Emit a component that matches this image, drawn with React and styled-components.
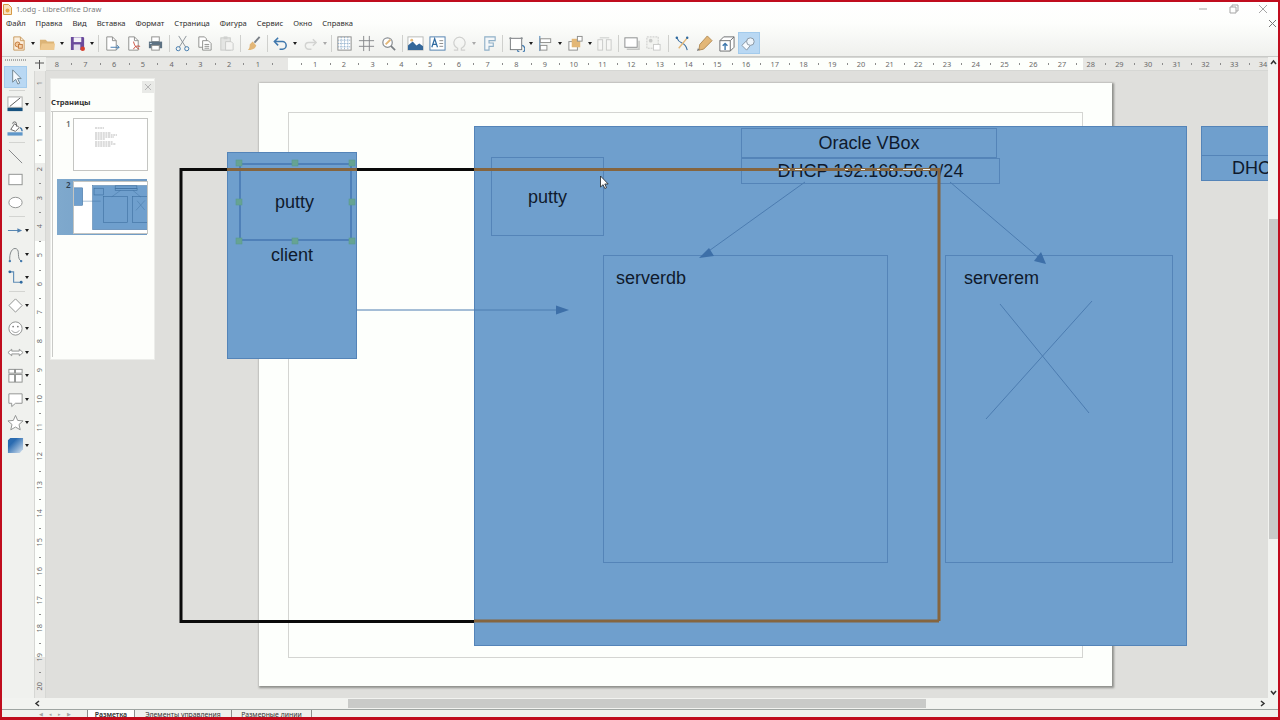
import React from 'react';
import styled, { createGlobalStyle } from 'styled-components';

const GlobalStyle = createGlobalStyle`
  html, body { margin: 0; padding: 0; background: #fff; overflow: hidden; }
  * { box-sizing: border-box; }
`;

// top left corner of the canvas in page pixels, nodes below are given in page pixels
const ORIGIN_X = 158;
const ORIGIN_Y = 71;
const CM = 28.73;

const Window = styled.div`
  width: 1280px;
  height: 720px;
  display: flex;
  flex-direction: column;
  overflow: hidden;
  border: 2px solid #c00d1e;
  border-bottom-width: 3px;
  background: #f0f1ee;
  font-family: "Noto Sans", "Open Sans", sans-serif;
`;

const Head = styled.div`
  background: linear-gradient(#ffffff, #fdfefc 40%, #eff0ed);
  border-bottom: 1px solid #c9cac7;
`;

const TitleBar = styled.div`
  height: 14px;
  display: flex;
  align-items: center;
  padding-left: 1px;
  gap: 4px;
  font-size: 7.5px;
  color: #7c7c7c;
`;

const WindowButtons = styled.div`
  margin-left: auto;
  display: flex;
  align-items: center;
  gap: 14px;
  padding-right: 7px;
`;

const WinButton = styled.svg`
  width: 16px;
  height: 10px;
  stroke: #a5a5a5;
  fill: none;
`;

const MenuBar = styled.div`
  height: 14px;
  display: flex;
  align-items: center;
  padding-left: 4px;
  gap: 10px;
  font-size: 7.6px;
  color: #2d2d2d;
`;

const DocClose = styled.svg`
  margin-left: auto;
  margin-right: 1px;
  width: 9px;
  height: 9px;
  stroke: #777;
  fill: none;
`;

const Toolbar = styled.div`
  height: 26px;
  display: flex;
  align-items: center;
  padding-left: 5px;
`;

const ToolButton = styled.div`
  width: 22px;
  height: 22px;
  flex: none;
  display: flex;
  align-items: center;
  justify-content: center;
  background: ${p => (p.$active ? '#b9d8f3' : 'transparent')};
  border: 1px solid ${p => (p.$active ? '#a3cbec' : 'transparent')};
  svg { width: 17px; height: 17px; display: block; }
`;

const DropArrow = styled.div`
  width: 7.5px;
  height: 22px;
  flex: none;
  display: flex;
  align-items: center;
  justify-content: center;
  &::after {
    content: "";
    border-left: 2.5px solid transparent;
    border-right: 2.5px solid transparent;
    border-top: 3px solid ${p => (p.$faded ? '#a9a9a9' : '#1c1c1c')};
  }
`;

const Sep = styled.div`
  width: ${p => (p.$wide ? 7 : 5)}px;
  height: 17px;
  flex: none;
  &::after {
    content: "";
    display: block;
    width: 1px;
    height: 100%;
    margin: 0 auto;
    background: #cfd0cd;
  }
`;

const Body = styled.div`
  flex: 1;
  min-height: 0;
  display: flex;
`;

const SideTools = styled.div`
  width: 32px;
  flex: none;
  display: flex;
  flex-direction: column;
  padding: 2px 0 0 2px;
  background: #f0f1ee;
`;

const Grip = styled.div`
  width: 22px;
  height: 2px;
  margin: 0 0 4px 1px;
  flex: none;
  background-image: linear-gradient(90deg, #a9aaa8 50%, transparent 50%);
  background-size: 2px 2px;
`;

const SideRow = styled.div`
  height: 23.4px;
  flex: none;
  display: flex;
  align-items: center;
  ${ToolButton} { width: 23px; }
  ${DropArrow} { margin-left: -4px; }
`;

const SideSep = styled.div`
  height: 4.6px;
  flex: none;
  display: flex;
  align-items: center;
  padding-left: 5px;
  &::after {
    content: "";
    width: 16px;
    height: 1px;
    background: #d3d4d1;
  }
`;

const Center = styled.div`
  flex: 1;
  min-width: 0;
  display: flex;
  flex-direction: column;
`;

const RulerRow = styled.div`
  height: 14px;
  flex: none;
  display: flex;
`;

const RulerCorner = styled.svg`
  width: 12px;
  height: 14px;
  flex: none;
  stroke: #555;
  fill: none;
`;

const HRuler = styled.div`
  flex: 1;
  min-width: 0;
  display: flex;
  overflow: hidden;
  border-top: 1px solid #d6d7d4;
  border-bottom: 1px solid #d6d7d4;
  background: linear-gradient(90deg, #e7e7e4 242px, #fdfffc 242px, #fdfffc 1037px, #e7e7e4 1037px);
`;

const HCell = styled.div`
  width: ${CM}px;
  flex: none;
  position: relative;
  text-align: center;
  font-size: 7.4px;
  line-height: 12px;
  color: #6a6a6a;
  &:first-child { margin-left: -3.6px; }
  &::after {
    content: "";
    position: absolute;
    left: 0;
    top: 5px;
    width: 1px;
    height: 2px;
    background: #8c8c8c;
  }
`;

const WorkRow = styled.div`
  flex: 1;
  min-height: 0;
  display: flex;
`;

const VRuler = styled.div`
  width: 12px;
  flex: none;
  display: flex;
  flex-direction: column;
  overflow: hidden;
  border-left: 1px solid #d6d7d4;
  border-right: 1px solid #d6d7d4;
  background: linear-gradient(#e7e7e4 41px, #fdfffc 41px, #fdfffc 92px, #ecedea 92px, #ecedea 170px, #fdfffc 170px, #fdfffc 586px, #e7e7e4 586px);
`;

const VCell = styled.div`
  height: ${CM}px;
  flex: none;
  position: relative;
  display: flex;
  align-items: center;
  justify-content: center;
  font-size: 7.4px;
  color: #6a6a6a;
  &:first-child { margin-top: -2.5px; }
  &::after {
    content: "";
    position: absolute;
    top: 0;
    left: 4px;
    width: 2px;
    height: 1px;
    background: #8c8c8c;
  }
`;

const VLabel = styled.span`
  writing-mode: vertical-rl;
  transform: rotate(180deg);
  line-height: 1;
`;

const Workspace = styled.div`
  flex: 1;
  min-width: 0;
  display: flex;
  background: #dfdfdc;
`;

const PagesColumn = styled.div`
  width: 112px;
  flex: none;
  padding: 7px 0 0 4px;
`;

const PagesPanel = styled.div`
  width: 105px;
  height: 282px;
  display: flex;
  flex-direction: column;
  padding: 2px 0 2px 0;
  background: #fdfefb;
  border: 1px solid #ecedea;
`;

const PanelClose = styled.div`
  align-self: flex-end;
  width: 12px;
  height: 12px;
  display: flex;
  align-items: center;
  justify-content: center;
  background: #e9eae7;
  svg { width: 6px; height: 6px; stroke: #b5b5b5; fill: none; }
`;

const PanelTitle = styled.div`
  margin-top: 3px;
  margin-right: 2px;
  padding-bottom: 3px;
  font-size: 7.6px;
  font-weight: 700;
  line-height: 12px;
  color: #333;
  border-bottom: 1px solid #c9cac7;
`;

const PageList = styled.div`
  flex: 1;
  display: flex;
  flex-direction: column;
  gap: 8px;
  padding: 6px 7px 0 4px;
  margin-left: 1px;
  border-left: 1px solid #c9cac7;
`;

const PageItem = styled.div`
  height: ${p => (p.$selected ? 56 : 53)}px;
  display: flex;
  align-items: center;
  background: ${p => (p.$selected ? 'linear-gradient(90deg, #7fa9cd, #6f9ac4)' : 'transparent')};
  padding-left: 9px;
  gap: 3px;
`;

const PageNumber = styled.span`
  align-self: flex-start;
  width: 5px;
  margin-top: 1px;
  font-size: 8px;
  font-weight: 600;
  line-height: 10px;
  color: ${p => (p.$selected ? '#2d3e50' : '#666')};
`;

const Thumb = styled.svg`
  width: 73px;
  height: 51px;
  flex: none;
  display: block;
  background: #fff;
  box-shadow: 0 0 0 1px #c4c5c2;
`;

const Canvas = styled.div`
  flex: 1;
  min-width: 0;
  position: relative;
  overflow: hidden;
`;

const Sheet = styled.div`
  position: absolute;
  left: ${259 - ORIGIN_X}px;
  top: ${83 - ORIGIN_Y}px;
  width: 853px;
  height: 603px;
  background: #fdfffc;
  box-shadow: 1px 1px 2px 1px #8f908c;
`;

const SheetMargin = styled.div`
  position: absolute;
  left: 29px;
  top: 29px;
  width: 795px;
  height: 546px;
  border: 1px solid #d4d5d2;
`;

const Shape = styled.div`
  position: absolute;
  left: ${p => p.$x - ORIGIN_X}px;
  top: ${p => p.$y - ORIGIN_Y}px;
  width: ${p => p.$w}px;
  height: ${p => p.$h}px;
  display: flex;
  align-items: center;
  justify-content: center;
  background: #6f9fcd;
  border: 1px solid #5484b8;
`;

const Frame = styled(Shape)`
  background: transparent;
  justify-content: ${p => (p.$left ? 'flex-start' : 'center')};
  align-items: ${p => (p.$left ? 'flex-start' : 'center')};
  padding: ${p => (p.$left ? `${p.$left[1]}px 0 0 ${p.$left[0]}px` : '0')};
`;

const SelectedFrame = styled(Frame)`
  border: 2px solid #4f80b8;
  padding-right: 2px;
`;

const Label = styled.span`
  font-family: "Liberation Sans", Arial, sans-serif;
  font-size: 18px;
  line-height: 22px;
  color: #0f1a2c;
  white-space: nowrap;
`;

const FloatLabel = styled(Label)`
  position: absolute;
  left: ${p => p.$x - ORIGIN_X}px;
  top: ${p => p.$y - ORIGIN_Y}px;
  width: ${p => p.$w}px;
  text-align: center;
`;

const Overlay = styled.svg`
  position: absolute;
  left: 0;
  top: 0;
  width: 1110px;
  height: 627px;
  overflow: hidden;
`;

const ScrollRight = styled.div`
  width: 10px;
  flex: none;
  display: flex;
  flex-direction: column;
  align-items: center;
  padding: 2px 0 2px;
  background: #f2f3f0;
  svg { width: 7px; height: 6px; stroke: #333; fill: none; stroke-width: 1.5; flex: none; }
`;

const ScrollTrackV = styled.div`
  flex: 1;
  width: 100%;
  padding-top: 154px;
  padding-bottom: 151px;
  display: flex;
`;

const ScrollThumb = styled.div`
  flex: 1;
  margin-left: 1px;
  background: #c9cac8;
`;

const ScrollBottom = styled.div`
  height: 11px;
  flex: none;
  display: flex;
  align-items: center;
  padding: 0 12px 0 32px;
  background: #f2f3f0;
  svg { width: 6px; height: 7px; stroke: #333; fill: none; stroke-width: 1.5; flex: none; }
`;

const ScrollTrackH = styled.div`
  flex: 1;
  height: 100%;
  padding: 1px 334px 1px 308px;
  display: flex;
`;

const ScrollThumbH = styled.div`
  flex: 1;
  background: #c9cac8;
`;

const TabBar = styled.div`
  height: 8px;
  flex: none;
  display: flex;
  align-items: flex-start;
  padding-left: 37px;
  border-top: 1px solid #9fa5a2;
  background: #f0f1ee;
  overflow: hidden;
  font-size: 6.9px;
`;

const TabNav = styled.div`
  width: 48px;
  flex: none;
  display: flex;
  gap: 6px;
  padding-top: 1px;
  color: #a2a2a2;
  font-size: 5px;
  line-height: 7px;
`;

const Tab = styled.div`
  height: 9px;
  flex: none;
  width: ${p => p.$w}px;
  text-align: center;
  line-height: 10px;
  background: ${p => (p.$active ? '#ffffff' : '#eff0ed')};
  font-weight: ${p => (p.$active ? 600 : 400)};
  color: #333;
  border-left: 1px solid #8d8d8d;
  &:last-child { border-right: 1px solid #8d8d8d; }
`;

const GRAY = '#8d8e8c';
const BLUE = '#3f78ad';
const TAN = '#e3b777';
const FADE = '#c9cac8';

// toolbar pictures, all on a 18x18 box
const icons = {
  new: <><path d="M4 2h7l4 4v10H4z" fill="#fbeedd" stroke="#c99a5e" /><path d="M11 2v4h4" fill="none" stroke="#c99a5e" /><circle cx="8" cy="10" r="2.6" fill="#f3c99a" stroke="#c47a3e" /><rect x="9" y="10" width="4" height="4" fill="#f3d3ab" stroke="#c47a3e" /></>,
  open: <><path d="M1 5h6l2 2h7v9H1z" fill="#dcb477" /><path d="M1 16l2-7h14l-1 7z" fill="#eec990" /></>,
  save: <><path d="M2 2h13l1 1v13H2z" fill="#6a4a9c" /><rect x="5" y="2.5" width="8" height="5" fill="#f3f1f7" /><rect x="5" y="10" width="7" height="6" fill="#e4e0ee" /><circle cx="14.5" cy="14.5" r="2.4" fill="#d8402e" /></>,
  export: <><path d="M4 2h6l4 4v10H4z" fill="#fff" stroke={GRAY} /><path d="M10 2v4h4" fill="none" stroke={GRAY} /><path d="M8 13h9M14.5 10.5L17 13l-2.5 2.5" fill="none" stroke={BLUE} /></>,
  pdf: <><path d="M4 2h6l4 4v10H4z" fill="#fff" stroke={GRAY} /><path d="M10 2v4h4" fill="none" stroke={GRAY} /><path d="M9 7c1 4 2 6 6 8M9 15c1-3 4-4 7-3" fill="none" stroke="#c84a3a" /></>,
  print: <><rect x="5" y="2" width="8" height="5" fill="#fff" stroke={GRAY} /><path d="M2 7h14v7H2z" fill="#5d7283" /><rect x="5" y="11" width="8" height="5" fill="#fff" stroke={GRAY} /><rect x="3" y="8.5" width="2" height="1" fill="#cfe0ec" /></>,
  cut: <><path d="M5 1l7.5 12M13 1L5.5 13" fill="none" stroke="#8a9298" strokeWidth="1" /><circle cx="4.5" cy="14.5" r="2.2" fill="none" stroke={BLUE} strokeWidth="1" /><circle cx="13.5" cy="14.5" r="2.2" fill="none" stroke={BLUE} strokeWidth="1" /></>,
  copy: <><path d="M3 2h6l2 2v9H3z" fill="#fff" stroke={GRAY} /><path d="M7 6h6l3 3v7H7z" fill="#fff" stroke={GRAY} /><path d="M9 10h5M9 12h5M9 14h5" stroke={GRAY} /></>,
  paste: <><rect x="3" y="3" width="10" height="13" fill="#e4e5e3" stroke={FADE} /><rect x="6" y="1.5" width="4" height="3" fill="#d0d1cf" /><path d="M8 7h6l2 2v7H8z" fill="#f4f4f2" stroke={FADE} /></>,
  clone: <><path d="M15.5 2L10 8" stroke="#7b8087" strokeWidth="2" /><path d="M8 7l4 4-1 2c-1 2-4 3-8 3 2-2 2-4 2-6z" fill={TAN} /></>,
  undo: <><path d="M3 7h8a4 4 0 010 8H8" fill="none" stroke={BLUE} strokeWidth="1.6" /><path d="M6.5 3L2.5 7l4 4" fill="none" stroke={BLUE} strokeWidth="1.6" /></>,
  redo: <><path d="M15 8H7a3.5 3.5 0 000 7h3" fill="none" stroke="#d2d3d1" strokeWidth="1.5" /><path d="M11.5 4.5L15 8l-3.5 3.5" fill="none" stroke="#d2d3d1" strokeWidth="1.5" /></>,
  grid: <><rect x="2" y="2" width="14" height="14" fill="#fff" stroke="#8a8b89" /><path d="M2 5.5h14M2 9h14M2 12.5h14M5.5 2v14M9 2v14M12.5 2v14" stroke="#7ea3c4" strokeDasharray="1 1" /></>,
  help: <path d="M1 6h16M1 12h16M6 1v16M12 1v16" stroke="#85878a" strokeWidth="1" fill="none" />,
  zoom: <><circle cx="8" cy="8" r="5" fill="#fff" stroke="#8a8f93" strokeWidth="1.3" /><path d="M11.5 11.5L16 16" stroke="#7a7f83" strokeWidth="1.8" /><path d="M6 10l5-5" stroke={TAN} strokeWidth="2" /></>,
  image: <><rect x="1" y="2" width="16" height="14" fill="#fff" stroke="#b8b9b7" /><path d="M1 16V11l5-4 4 4 3-2 4 3v4z" fill="#35689a" /><circle cx="5" cy="5.5" r="1.5" fill={TAN} /></>,
  textbox: <><rect x="1" y="2" width="16" height="14" fill="#fff" stroke="#4e7fae" /><path d="M3 13l3-9 3 9M4 10h4" fill="none" stroke="#2f6aa0" strokeWidth="1.3" /><path d="M11 6h4M11 9h4M11 12h4" stroke="#8a8b89" /></>,
  omega: <path d="M3 16h4v-2a6 6 0 114 0v2h4" fill="none" stroke="#cfd0ce" strokeWidth="1.3" />,
  fontwork: <path d="M4 2h11v4H8.5v2.5H13v3.500H8.5V16H4z" fill="#f4f7f9" stroke="#8fb0c8" strokeWidth="1.2" />,
  transform: <><rect x="2.5" y="3.5" width="12" height="12" fill="#fff" stroke="#75787c" /><path d="M10 16a4 4 0 105-5" fill="none" stroke={BLUE} strokeWidth="1.3" /><circle cx="2.5" cy="3.5" r="1.2" fill="#8a8f93" /><circle cx="14.5" cy="3.5" r="1.2" fill="#8a8f93" /></>,
  align: <><path d="M3 1v16" stroke={BLUE} /><rect x="3.5" y="4" width="11" height="4" fill="#fff" stroke={GRAY} /><rect x="3.5" y="11" width="7" height="5" fill="#fff" stroke={GRAY} /></>,
  arrange: <><rect x="2" y="7" width="9" height="9" fill="#fff" stroke={GRAY} /><rect x="5" y="4" width="9" height="9" fill={TAN} /><rect x="11" y="1.5" width="5" height="5" fill="#fff" stroke={GRAY} /></>,
  distribute: <><rect x="2" y="5" width="5" height="11" fill="#f7f7f5" stroke={FADE} /><rect x="11" y="5" width="5" height="11" fill="#f7f7f5" stroke={FADE} /><path d="M4 3h10" stroke={FADE} /></>,
  shadow: <><rect x="2" y="3" width="13" height="10" fill="#fff" stroke="#8a8c8d" /><path d="M4 15h13V6" fill="none" stroke="#c4c5c3" strokeWidth="1.5" /></>,
  crop: <><rect x="2" y="2" width="12" height="12" fill="#f2f3f0" stroke={FADE} strokeDasharray="2 1" /><rect x="9" y="10" width="7" height="6" fill="#fff" stroke={FADE} /><circle cx="6" cy="6" r="2" fill={FADE} /></>,
  points: <><path d="M3 3c3 8 9 3 11 13" fill="none" stroke="#3d6f9f" strokeWidth="1.2" /><path d="M14 3L5 14" stroke={TAN} strokeWidth="1.5" /><circle cx="3" cy="3" r="1.3" fill="#2f6aa0" /><circle cx="14" cy="3" r="1.3" fill="#2f6aa0" /></>,
  glue: <><path d="M12 1l5 5-9 9-5 1 1-6z" fill={TAN} stroke="#b08a55" /><path d="M1 17l3-1-2-2z" fill="#77797a" /></>,
  extrude: <><path d="M2 6h11v11H2zM2 6l4-4h11v11l-4 4M13 6l4-4" fill="#fff" stroke="#6a6c6e" /><path d="M7.5 16V9M5 11.5L7.5 9l2.5 2.500" fill="none" stroke={BLUE} strokeWidth="1.5" /></>,
  toggle: <><path d="M2 11l5-5 4 5-4 5z" fill="#f7fbff" stroke="#8593a0" /><circle cx="11" cy="7" r="4" fill="#eef5fb" stroke="#8593a0" /></>,
  select: <path d="M6 2v13l3.2-3 2.3 5 2-1-2.3-4.800H15z" fill="#f5f9fd" stroke="#70848f" />,
  lineColor: <><rect x="1" y="1" width="15" height="11" fill="#fff" stroke="#a9aaa8" /><path d="M3 11L14 2" stroke="#555" /><rect x="0.5" y="12.5" width="16" height="3.5" fill="#17527f" /></>,
  fill: <><path d="M4 10l4-6 5 4-4 4z" fill="#fff" stroke="#666" /><path d="M6 4a2 2 0 014 0v3" fill="none" stroke="#666" /><path d="M14 8c2 1 2 3 2 4" stroke="#3f78ad" fill="none" strokeWidth="1.5" /><rect x="0.5" y="13" width="16" height="3.5" fill="#5f97c9" /></>,
  line: <path d="M2 2l14 14" stroke="#818386" strokeWidth="1" fill="none" />,
  rect: <rect x="2" y="3.5" width="14" height="11" fill="#fff" stroke="#8e908f" />,
  ellipse: <ellipse cx="9" cy="9" rx="7" ry="5.5" fill="#fff" stroke="#8e908f" />,
  arrowLine: <><path d="M1 9h11" stroke="#4e7fae" strokeWidth="1" /><path d="M11 6.5L16 9l-5 2.5z" fill="#4e7fae" /></>,
  curve: <><path d="M3 16C2 7 6 1 10 3s0 10 5 13" fill="none" stroke="#7c8285" strokeWidth="1" /><circle cx="3" cy="16" r="1.3" fill="#3f78ad" /><circle cx="15" cy="16" r="1.3" fill="#3f78ad" /></>,
  connector: <><path d="M3 3h4v11h8" fill="none" stroke="#5d8cb5" strokeWidth="1.2" /><circle cx="3" cy="3" r="1.5" fill="#2f6aa0" /><circle cx="15" cy="14" r="1.5" fill="#2f6aa0" /></>,
  diamond: <path d="M9 2l7 7-7 7-7-7z" fill="#fff" stroke="#8e908f" />,
  smiley: <><circle cx="9" cy="9" r="7" fill="#fff" stroke="#8e908f" /><circle cx="6.5" cy="7" r="0.9" fill="#777" /><circle cx="11.5" cy="7" r="0.9" fill="#777" /><path d="M5 11c2 3 6 3 8 0" fill="none" stroke="#8e908f" /></>,
  doubleArrow: <path d="M1 9l4-3.500V7.500h8V5.500L17 9l-4 3.500v-2H5v2z" fill="#fff" stroke="#8e908f" />,
  flow: <><rect x="2" y="2.5" width="6" height="4" fill="#fff" stroke="#8e908f" /><rect x="9" y="2.5" width="7" height="4" fill="#fff" stroke="#8e908f" /><rect x="2" y="8" width="6" height="8" fill="#fff" stroke="#8e908f" /><rect x="9" y="8" width="7" height="8" fill="#fff" stroke="#8e908f" /></>,
  callout: <path d="M2 3h14v10H9l-4 3.500V13H2z" fill="#fff" stroke="#8e908f" />,
  star: <path d="M9 1.500l2.300 5.300 5.700.5-4.300 3.800 1.300 5.600L9 13.800l-5 2.900 1.300-5.600L1 7.300l5.700-.5z" fill="#fff" stroke="#8e908f" />,
  cube: <><defs><linearGradient id="cb" x1="0" y1="0" x2="1" y2="1"><stop offset="0.3" stopColor="#2a6bb0" /><stop offset="1" stopColor="#d9e5f1" /></linearGradient></defs><path d="M1 3.500L3.500 1H17v12l-3.500 4H1z" fill="url(#cb)" /></>,
};

const Icon = ({ name }) => <svg viewBox="0 0 18 18">{icons[name]}</svg>;

const topTools = [
  { i: 'new', d: 1 }, { i: 'open', d: 1 }, { i: 'save', d: 1 }, '|',
  { i: 'export' }, { i: 'pdf' }, { i: 'print' }, '|',
  { i: 'cut' }, { i: 'copy' }, { i: 'paste' }, '|',
  { i: 'clone' }, '|',
  { i: 'undo', d: 1 }, { i: 'redo', d: 2 }, '|',
  { i: 'grid' }, { i: 'help' }, { i: 'zoom' }, '|',
  { i: 'image' }, { i: 'textbox' }, { i: 'omega', d: 2 }, { i: 'fontwork' }, '|',
  { i: 'transform', d: 1 }, { i: 'align', d: 1 }, { i: 'arrange', d: 1 }, { i: 'distribute' }, '|',
  { i: 'shadow' }, { i: 'crop' }, '||',
  { i: 'points' }, { i: 'glue' }, { i: 'extrude' }, { i: 'toggle', active: true },
];

const sideTools = [
  { i: 'select', active: true }, '|',
  { i: 'lineColor', d: 1 }, { i: 'fill', d: 1 }, '|',
  { i: 'line' }, { i: 'rect' }, { i: 'ellipse' }, '|',
  { i: 'arrowLine', d: 1 }, { i: 'curve', d: 1 }, { i: 'connector', d: 1 }, '|',
  { i: 'diamond', d: 1 }, { i: 'smiley', d: 1 }, { i: 'doubleArrow', d: 1 },
  { i: 'flow', d: 1 }, { i: 'callout', d: 1 }, { i: 'star', d: 1 }, { i: 'cube', d: 1 },
];

const menus = ['Файл', 'Правка', 'Вид', 'Вставка', 'Формат', 'Страница', 'Фигура', 'Сервис', 'Окно', 'Справка'];

const hCells = Array.from({ length: 43 }, (_, k) => k - 8);
const vCells = Array.from({ length: 23 }, (_, k) => k - 1);

const handles = [
  [239, 163], [295, 163], [352, 163],
  [239, 202], [352, 202],
  [239, 241], [295, 241], [352, 241],
];

// bits of the line that come out white where it runs through the DHCP text
const lineGlints = 'M779 169.5h4M788 169.5h2M795 169.5h7M845 169.5h3M861 169.5h4M877 169.5h3M890 169.5h3M903 169.5h13M923 169.5h7';

// miniature of the drawing, in the same page pixels as the big one
const MiniDrawing = () => (
  <Thumb viewBox="259 83 853 603">
    <g fill="#6f9fcd" stroke="#3d6f9f" strokeWidth="6">
      <rect x="227" y="152" width="130" height="207" />
      <rect x="474" y="126" width="713" height="520" />
    </g>
    <g fill="none" stroke="#3d6f9f" strokeWidth="7">
      <rect x="491" y="157" width="113" height="79" />
      <rect x="741" y="128" width="256" height="30" />
      <rect x="741" y="158" width="259" height="26" />
      <rect x="603" y="255" width="285" height="308" />
      <rect x="945" y="255" width="228" height="308" />
      <path d="M357 310H569M805 182L700 258M950 182L1046 263M1000 304L1089 413M1092 301L986 419" strokeWidth="5" />
    </g>
  </Thumb>
);

const TextPage = () => (
  <Thumb viewBox="0 0 73 51">
    <path d="M21 9h9M21 14h16M21 16h22M21 18h19M21 20h10M21 23h18M21 25h21M21 27h16" stroke="#8b8b8b" strokeWidth="0.6" strokeDasharray="2 0.6" />
  </Thumb>
);

const App = () => (
  <Window>
    <GlobalStyle />
    <Head>
      <TitleBar>
        <svg width="9" height="11" viewBox="0 0 9 11">
          <path d="M.5.5h5l3 3v7H.5z" fill="#f8e3c2" stroke="#d69a45" />
          <circle cx="4.5" cy="6.5" r="2" fill="#e8a848" />
        </svg>
        <span>1.odg - LibreOffice Draw</span>
        <WindowButtons>
          <WinButton viewBox="0 0 16 10"><path d="M4 5h8" /></WinButton>
          <WinButton viewBox="0 0 16 10"><path d="M5 3h6v6H5zM7 3V1h6v6h-2" /></WinButton>
          <WinButton viewBox="0 0 16 10"><path d="M4 1l8 8M12 1l-8 8" /></WinButton>
        </WindowButtons>
      </TitleBar>
      <MenuBar>
        {menus.map(m => <span key={m}>{m}</span>)}
        <DocClose viewBox="0 0 9 9"><path d="M1 1l7 7M8 1L1 8" /></DocClose>
      </MenuBar>
      <Toolbar>
        {topTools.map((t, idx) => (typeof t === 'string' ? <Sep key={idx} $wide={t === '||'} /> : (
          <React.Fragment key={idx}>
            <ToolButton $active={t.active}><Icon name={t.i} /></ToolButton>
            {t.d ? <DropArrow $faded={t.d === 2} /> : null}
          </React.Fragment>
        )))}
      </Toolbar>
    </Head>

    <Body>
      <SideTools>
        <Grip />
        {sideTools.map((t, idx) => (t === '|' ? <SideSep key={idx} /> : (
          <SideRow key={idx}>
            <ToolButton $active={t.active}><Icon name={t.i} /></ToolButton>
            {t.d ? <DropArrow /> : null}
          </SideRow>
        )))}
      </SideTools>

      <Center>
        <RulerRow>
          <RulerCorner viewBox="0 0 12 14"><path d="M1 6h9M5.5 3v9" /></RulerCorner>
          <HRuler>
            {hCells.map(n => <HCell key={n}>{n === 0 ? '' : Math.abs(n)}</HCell>)}
          </HRuler>
        </RulerRow>
        <WorkRow>
          <VRuler>
            {vCells.map(n => <VCell key={n}><VLabel>{n === 0 ? '' : Math.abs(n)}</VLabel></VCell>)}
          </VRuler>
          <Workspace>
            <PagesColumn>
              <PagesPanel>
                <PanelClose><svg viewBox="0 0 6 6"><path d="M0 0l6 6M6 0L0 6" /></svg></PanelClose>
                <PanelTitle>Страницы</PanelTitle>
                <PageList>
                  <PageItem><PageNumber>1</PageNumber><TextPage /></PageItem>
                  <PageItem $selected><PageNumber $selected>2</PageNumber><MiniDrawing /></PageItem>
                </PageList>
              </PagesPanel>
            </PagesColumn>
            <Canvas>
              <Sheet><SheetMargin /></Sheet>
              <Overlay viewBox={`${ORIGIN_X} ${ORIGIN_Y} 1110 627`}>
                <rect x="181" y="169.5" width="758" height="452" fill="none" stroke="#0a0a0a" strokeWidth="3" />
              </Overlay>
              <Shape $x={227} $y={152} $w={130} $h={207} />
              <Shape $x={474} $y={126} $w={713} $h={520} />
              <Shape $x={1201} $y={126} $w={248} $h={30} />
              <Shape $x={1201} $y={155} $w={248} $h={26}><Label>DHCP 192.168.56.0/24</Label></Shape>
              <SelectedFrame $x={239} $y={163} $w={113} $h={78}><Label>putty</Label></SelectedFrame>
              <FloatLabel $x={227} $y={244} $w={130}>client</FloatLabel>
              <Frame $x={491} $y={157} $w={113} $h={79}><Label>putty</Label></Frame>
              <Frame $x={741} $y={128} $w={256} $h={30}><Label>Oracle VBox</Label></Frame>
              <Frame $x={741} $y={158} $w={259} $h={26}><Label>DHCP 192.168.56.0/24</Label></Frame>
              <Frame $x={603} $y={255} $w={285} $h={308} $left={[12, 11]}><Label>serverdb</Label></Frame>
              <Frame $x={945} $y={255} $w={228} $h={308} $left={[18, 11]}><Label>serverem</Label></Frame>
              <Overlay viewBox={`${ORIGIN_X} ${ORIGIN_Y} 1110 627`}>
                <path d="M227 169.5H357M474 169.5H939V621M939 621H474" fill="none" stroke="#85653f" strokeWidth="3" />
                <path d={lineGlints} fill="none" stroke="#f4f4ef" strokeWidth="1.2" />
                <g stroke="#4c7cb0" strokeWidth="1" fill="none">
                  <path d="M357 310H560M805 182L706 253M950 182L1038 257M1000 304L1089 413M1092 301L986 419" />
                </g>
                <g fill="#3d6fa8">
                  <path d="M569 310L556 305.5V314.5z" />
                  <path d="M699 258L709 248L714 256z" />
                  <path d="M1046 264L1034 261L1041 252z" />
                </g>
                <g fill="#66a393" stroke="#5a9c8c" strokeWidth="0.6">
                  {handles.map(([x, y]) => <rect key={`${x}-${y}`} x={x - 3} y={y - 3} width="6" height="6" />)}
                </g>
                <path d="M600.5 176v11l2.6-2.300 1.700 3.800 1.700-.8-1.700-3.700h3.400z" fill="#fff" stroke="#222" strokeWidth="0.8" />
              </Overlay>
            </Canvas>
          </Workspace>
        </WorkRow>
      </Center>

      <ScrollRight>
        <svg viewBox="0 0 7 6"><path d="M1 5l2.5-3L6 5" /></svg>
        <ScrollTrackV><ScrollThumb /></ScrollTrackV>
        <svg viewBox="0 0 7 6"><path d="M1 1l2.5 3L6 1" /></svg>
      </ScrollRight>
    </Body>

    <ScrollBottom>
      <svg viewBox="0 0 6 7"><path d="M5 1L2 3.5 5 6" /></svg>
      <ScrollTrackH><ScrollThumbH /></ScrollTrackH>
      <svg viewBox="0 0 6 7"><path d="M1 1l3 2.5L1 6" /></svg>
    </ScrollBottom>
    <TabBar>
      <TabNav><span>◀</span><span>◂</span><span>▸</span><span>▶</span></TabNav>
      <Tab $active $w={47}>Разметка</Tab>
      <Tab $w={97}>Элементы управления</Tab>
      <Tab $w={81}>Размерные линии</Tab>
    </TabBar>
  </Window>
);

export default App;
